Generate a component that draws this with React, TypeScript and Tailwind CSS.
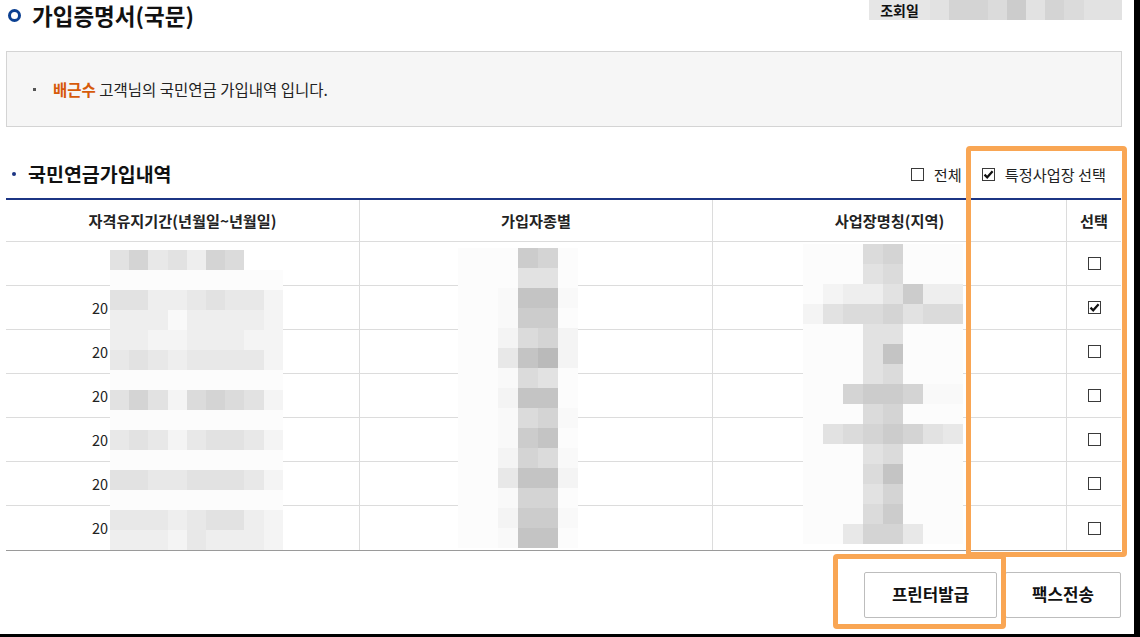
import React from "react";

const LV: Record<string, string> = {
  "0": "#bababa",
  "1": "#c4c4c4",
  "2": "#cccccc",
  "3": "#d4d4d4",
  "4": "#dbdbdb",
  "5": "#e2e2e2",
  "6": "#e8e8e8",
  "7": "#eeeeee",
  "8": "#f4f4f4",
  "9": "#f9f9f9",
  w: "#fcfcfc",
  ".": "transparent",
};

function Mosaic({ x, y, cw, ch, rows }: { x: number; y: number; cw: number; ch: number; rows: string[] }) {
  return (
    <div className="absolute flex flex-col pointer-events-none" style={{ left: x, top: y }}>
      {rows.map((r, i) => (
        <div key={i} className="flex">
          {r.split("").map((c, j) => (
            <div key={j} style={{ width: cw, height: ch, background: LV[c] }} />
          ))}
        </div>
      ))}
    </div>
  );
}

function Check({ checked }: { checked?: boolean }) {
  return (
    <span className="inline-flex w-[13px] h-[13px] border border-[#3a3a3a] bg-white items-center justify-center shrink-0">
      {checked && (
        <svg width="11" height="11" viewBox="0 0 11 11">
          <path d="M1.5 5.6 L4.2 8.3 L9.6 2.2" fill="none" stroke="#111" strokeWidth="2.2" />
        </svg>
      )}
    </span>
  );
}

const font = { fontFamily: '"Noto Sans CJK KR", "Noto Sans", sans-serif' };

export default function App() {
  const rows = [
    { t: "", c: false },
    { t: "20", c: true },
    { t: "20", c: false },
    { t: "20", c: false },
    { t: "20", c: false },
    { t: "20", c: false },
    { t: "20", c: false },
  ];
  return (
    <div className="w-[1140px] h-[637px] bg-black" style={font}>
      <div className="relative w-[1134px] h-[634px] bg-white overflow-hidden text-[#222]">
        {/* Title row */}
        <div className="flex items-start justify-between h-[51px]">
          <div className="flex items-center h-[30px] pl-[8px]">
            <span className="w-[13px] h-[13px] rounded-full border-[3px] border-[#0b3f91]" />
            <span className="ml-[11px] text-[22.5px] font-bold text-[#111] leading-[30px]">가입증명서(국문)</span>
          </div>
          <div className="flex items-start mr-[12px]">
            <div className="w-[61px] h-[20px] bg-[#e6e6e6] flex items-center justify-center text-[14px] font-bold text-[#111] leading-[20px]">
              조회일
            </div>
            <div className="w-[192px] h-[20px]" />
          </div>
        </div>

        {/* Info box */}
        <div className="ml-[6px] w-[1116px] h-[76px] bg-[#f6f6f6] border border-[#d4d4d4] flex items-center pl-[26px]">
          <span className="w-[3px] h-[3px] bg-[#555]" />
          <span className="ml-[17px] text-[15.5px] leading-[20px]">
            <span className="text-[#d65a0a] font-bold">배근수</span> 고객님의 국민연금 가입내역 입니다.
          </span>
        </div>

        {/* Section title */}
        <div className="h-[71px] pt-[23px] flex items-center justify-between pr-[28px]">
          <div className="flex items-center pl-[12px]">
            <span className="w-[4px] h-[4px] rounded-full bg-[#1c3584]" />
            <span className="ml-[12px] text-[19.5px] font-bold text-[#111] leading-[26px]">국민연금가입내역</span>
          </div>
          <div className="flex items-center text-[15.2px] leading-[20px]">
            <Check />
            <span className="ml-[10px]">전체</span>
            <span className="ml-[20px] flex"><Check checked /></span>
            <span className="ml-[10px]">특정사업장 선택</span>
          </div>
        </div>

        {/* Table */}
        <div className="ml-[6px] w-[1115px] border-t-2 border-[#1c3584] border-b border-b-[#9a9a9a]">
          <div className="grid grid-cols-[354px_353px_354px_54px] h-[42px] border-b border-[#dcdcdc] text-[15.2px] font-bold text-[#222]">
            <div className="flex items-center justify-center border-r border-[#dcdcdc]">자격유지기간(년월일~년월일)</div>
            <div className="flex items-center justify-center border-r border-[#dcdcdc]">가입자종별</div>
            <div className="flex items-center justify-center border-r border-[#dcdcdc]">사업장명칭(지역)</div>
            <div className="flex items-center justify-center">선택</div>
          </div>
          {rows.map((r, i) => (
            <div
              key={i}
              className={
                "grid grid-cols-[354px_353px_354px_54px] h-[44px] text-[14.5px] " +
                (i < rows.length - 1 ? "border-b border-[#dcdcdc]" : "")
              }
            >
              <div className="flex items-center pl-[86px] border-r border-[#dcdcdc]">{r.t}</div>
              <div className="border-r border-[#dcdcdc]" />
              <div className="border-r border-[#dcdcdc]" />
              <div className="flex items-center justify-center">
                <Check checked={r.c} />
              </div>
            </div>
          ))}
        </div>

        {/* Buttons */}
        <div className="flex justify-end gap-[8px] pr-[13px] mt-[21px]">
          <button className="w-[133px] h-[46px] border border-[#bdbdbd] rounded-[2px] bg-white text-[16.8px] font-bold text-[#111]">
            프린터발급
          </button>
          <button className="w-[116px] h-[46px] border border-[#bdbdbd] rounded-[2px] bg-white text-[16.8px] font-bold text-[#111]">
            팩스전송
          </button>
        </div>

        {/* Mosaics (privacy blur) */}
        <Mosaic x={930} y={0} cw={19.2} ch={20} rows={["5334253455"]} />
        <Mosaic
          x={110}
          y={250}
          cw={19.2}
          ch={20}
          rows={[
            "5365734..",
            "wwwwwwwww",
            "557765668",
            "777977778",
            "778877788",
            "656766668",
            "wwwwwwwww",
            "535843458",
            "wwwwwwwww",
            "656865568",
            "wwwwwwwww",
            "556655568",
            "wwwwwwwww",
            "666765578",
            "777867778",
          ]}
        />
        <Mosaic
          x={458}
          y={248}
          cw={20}
          ch={20}
          rows={[
            "www23w",
            "www55w",
            "ww9119",
            "ww922w",
            "ww8438",
            "ww6108",
            "ww945w",
            "ww811w",
            "ww9439",
            "ww921w",
            "ww8349",
            "ww6118",
            "ww933w",
            "ww8229",
            "ww911w",
          ]}
        />
        <Mosaic
          x={803}
          y={244}
          cw={20}
          ch={20}
          rows={[
            "www43www",
            "www54www",
            "w8775277",
            "85443544",
            "www55www",
            "www51www",
            "www54www",
            "ww322399",
            "www43www",
            "w5432356",
            "www54www",
            "www41www",
            "www53www",
            "www42www",
            "ww6336ww",
          ]}
        />

        {/* Highlight boxes */}
        <div className="absolute left-[966px] top-[146px] w-[161px] h-[411px] border-[5px] border-[#f9a654] rounded-[4px] pointer-events-none" />
        <div className="absolute left-[833px] top-[554px] w-[173px] h-[75px] border-[5px] border-[#f9a654] rounded-[4px] pointer-events-none" />
      </div>
    </div>
  );
}
